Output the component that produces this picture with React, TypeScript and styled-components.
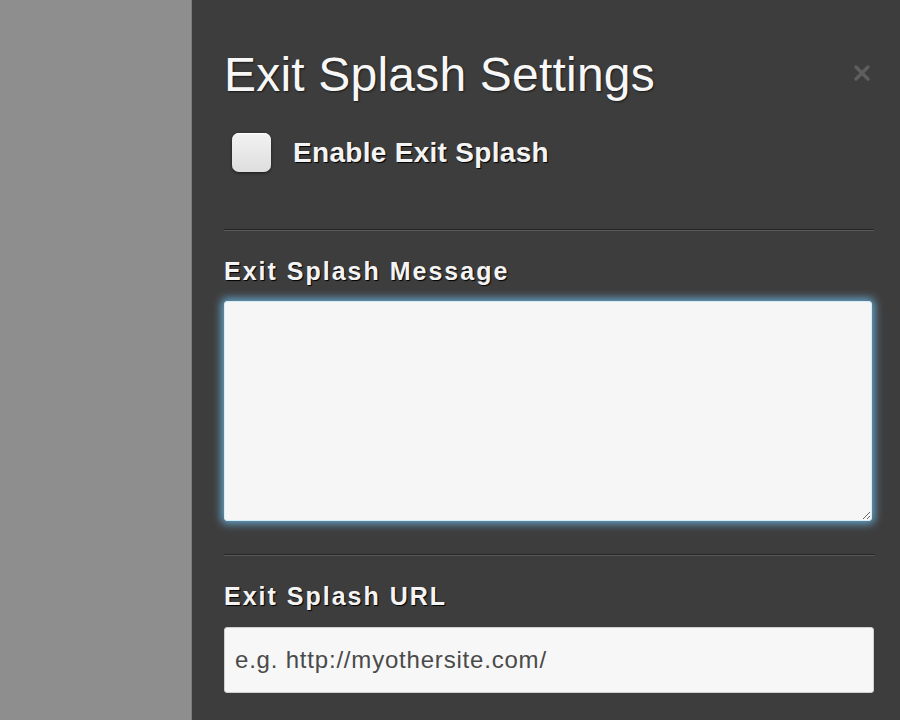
import React from 'react';
import styled, { createGlobalStyle } from 'styled-components';

const GlobalStyle = createGlobalStyle`
    html, body {
        margin: 0;
        padding: 0;
        background: #8e8e8e;
    }
    body {
        font-family: "Liberation Sans", Arial, sans-serif;
    }
`;

const PageBlock = styled.div`
    width: 900px;
    height: 720px;
    display: grid;
    grid-template-columns: 192px 1fr;
    overflow: hidden;
`;

const SideArea = styled.div`
    background: #8e8e8e;
    border-right: 1px solid #7c7c7c;
`;

const SettingsPanel = styled.div`
    background: #3e3d3d;
    padding: 48px 26px 0 32px;
    position: relative;
`;

const CloseButton = styled.button`
    position: absolute;
    top: 64px;
    right: 29px;
    width: 18px;
    height: 18px;
    padding: 0;
    border: none;
    background: transparent;
    cursor: pointer;
`;

const Title = styled.h1`
    margin: 0;
    font-size: 48px;
    line-height: 54px;
    font-weight: normal;
    letter-spacing: 0.2px;
    color: #f7f7f7;
    text-shadow: 1px 1px 2px rgba(0, 0, 0, 0.6);
`;

const CheckRow = styled.label`
    display: flex;
    align-items: center;
    gap: 22px;
    margin: 31px 0 0 8px;
    cursor: pointer;
`;

const CheckBox = styled.span`
    width: 39px;
    height: 39px;
    border-radius: 7px;
    background: linear-gradient(#f2f2f2, #dedede);
    box-shadow: 0 1px 3px rgba(0, 0, 0, 0.6), inset 0 1px 0 #fff;
`;

const CheckLabel = styled.span`
    font-size: 28px;
    line-height: 32px;
    font-weight: bold;
    letter-spacing: 0.3px;
    color: #f4f4f4;
    text-shadow: 1px 1px 1px #000;
`;

const Divider = styled.hr<{ $gap: number }>`
    margin: ${p => p.$gap}px 0 0;
    border: none;
    border-top: 1px solid #262626;
    border-bottom: 1px solid #595959;
    height: 0;
`;

const FieldLabel = styled.div`
    margin-top: 25px;
    font-size: 25px;
    line-height: 30px;
    font-weight: bold;
    letter-spacing: 2px;
    color: #f4f4f4;
    text-shadow: 1px 1px 1px #000;
`;

const MessageArea = styled.textarea`
    display: block;
    box-sizing: border-box;
    width: 648px;
    height: 220px;
    margin-top: 15px;
    border: 1px solid #d4eef9;
    border-radius: 3px;
    background: #f6f6f7;
    box-shadow: 0 0 8px 3px rgba(110, 185, 230, 0.8);
    font-family: "Liberation Sans", Arial, sans-serif;
    font-size: 20px;
    outline: none;
    resize: vertical;
`;

const UrlInput = styled.input`
    display: block;
    box-sizing: border-box;
    width: 650px;
    height: 66px;
    margin-top: 16px;
    padding: 0 10px;
    border: 1px solid #cfcfcf;
    border-radius: 3px;
    background: #f7f7f7;
    font-family: "Liberation Sans", Arial, sans-serif;
    font-size: 24px;
    letter-spacing: 0.8px;
    color: #333;
    outline: none;

    &::placeholder {
        color: #4a4a4a;
    }
`;

const App = () => {
    return (
        <PageBlock>
            <GlobalStyle />
            <SideArea />
            <SettingsPanel>
                <CloseButton aria-label="Close">
                    <svg width="18" height="18" viewBox="0 0 18 18">
                        <path
                            d="M3 3 L15 15 M15 3 L3 15"
                            stroke="#5e5e5e"
                            strokeWidth="3.5"
                            strokeLinecap="round"
                        />
                    </svg>
                </CloseButton>
                <Title>Exit Splash Settings</Title>
                <CheckRow>
                    <CheckBox />
                    <CheckLabel>Enable Exit Splash</CheckLabel>
                </CheckRow>
                <Divider $gap={57} />
                <FieldLabel>Exit Splash Message</FieldLabel>
                <MessageArea />
                <Divider $gap={33} />
                <FieldLabel>Exit Splash URL</FieldLabel>
                <UrlInput placeholder="e.g. http://myothersite.com/" />
            </SettingsPanel>
        </PageBlock>
    );
};

export default App;
